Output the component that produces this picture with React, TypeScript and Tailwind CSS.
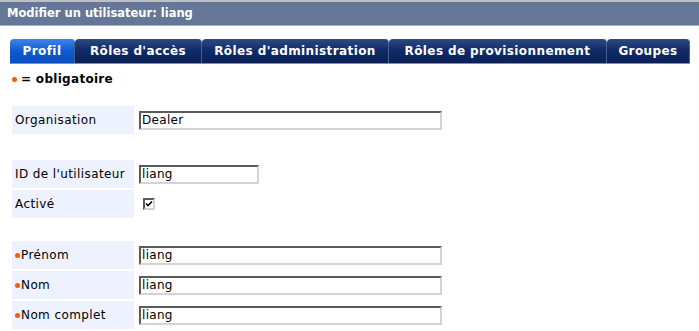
import React from 'react';

const tabs = [
  { label: 'Profil', active: true, w: 'w-[65px]' },
  { label: "Rôles d'accès", active: false, w: 'w-[127px]' },
  { label: "Rôles d'administration", active: false, w: 'w-[187px]' },
  { label: 'Rôles de provisionnement', active: false, w: 'w-[218px]' },
  { label: 'Groupes', active: false, w: 'w-[83px]' },
];

function Field({ value, w }: { value: string; w: string }) {
  return (
    <div
      className={`${w} h-[19px] bg-white border-2 border-t-[#5a5a5a] border-l-[#5a5a5a] border-b-[#d4d4d4] border-r-[#d4d4d4] pl-[1px] text-[12px] leading-[15px] tracking-[0.3px] text-black`}
    >
      {value}
    </div>
  );
}

function Row({
  label,
  required,
  children,
}: {
  label: string;
  required?: boolean;
  children: React.ReactNode;
}) {
  return (
    <div className="flex items-center h-[28px]">
      <div className="w-[122px] h-full bg-[#eef2fe] flex items-center pl-[3px] text-[12px] tracking-[0.4px] text-black">
        {required && <span className="w-[5px] h-[5px] rounded-full bg-[#ff5a00] mr-[1px]" />}
        {label}
      </div>
      <div className="pl-[5px] flex items-center">{children}</div>
    </div>
  );
}

export default function App() {
  return (
    <div className="w-[699px] h-[331px] bg-white overflow-hidden font-['DejaVu_Sans',Verdana,sans-serif]">
      <div className="h-[2px] bg-[#bcc0ca]" />
      <div className="h-[24px] bg-[#647797] border-b border-[#a4adbf] flex items-center pl-[7px] text-[11.5px] font-bold text-white">
        Modifier un utilisateur: liang
      </div>

      <div className="mt-[13px] ml-[10px] flex items-end border-b border-[#8a8f9a] w-[680px]">
        {tabs.map((t) => (
          <div
            key={t.label}
            className={`${t.w} h-[24px] flex items-center justify-center rounded-t-[4px] border-r border-[#4a5f8c] text-[12px] font-bold tracking-[0.4px] text-white ${
              t.active
                ? 'bg-gradient-to-b from-[#3d86e6] via-[#0e5ad2] to-[#0a4fc4]'
                : 'bg-gradient-to-b from-[#2c4a86] via-[#0f2a66] to-[#0a2158]'
            }`}
          >
            {t.label}
          </div>
        ))}
      </div>

      <div className="ml-[12px] mt-[6px] flex items-center text-[12px] font-bold tracking-[0.3px] text-black">
        <span className="w-[5px] h-[5px] rounded-full bg-[#ff5a00] mr-[4px]" />
        = obligatoire
      </div>

      <div className="ml-[12px] mt-[18px] flex flex-col">
        <Row label="Organisation">
          <Field value="Dealer" w="w-[303px]" />
        </Row>

        <div className="h-[26px]" />

        <div className="flex flex-col gap-[2px]">
          <Row label="ID de l'utilisateur">
            <Field value="liang" w="w-[120px]" />
          </Row>
          <Row label="Activé">
            <div className="ml-[4px] w-[12px] h-[12px] bg-white border-2 border-t-[#5a5a5a] border-l-[#5a5a5a] border-b-[#d4d4d4] border-r-[#d4d4d4] flex items-center justify-center">
              <svg width="8" height="8" viewBox="0 0 8 8">
                <path d="M1 3.5 L3 5.5 L7 1.5" stroke="#000" strokeWidth="1.6" fill="none" />
              </svg>
            </div>
          </Row>
        </div>

        <div className="h-[23px]" />

        <div className="flex flex-col gap-[2px]">
          <Row label="Prénom" required>
            <Field value="liang" w="w-[303px]" />
          </Row>
          <Row label="Nom" required>
            <Field value="liang" w="w-[303px]" />
          </Row>
          <Row label="Nom complet" required>
            <Field value="liang" w="w-[303px]" />
          </Row>
        </div>
      </div>
    </div>
  );
}
